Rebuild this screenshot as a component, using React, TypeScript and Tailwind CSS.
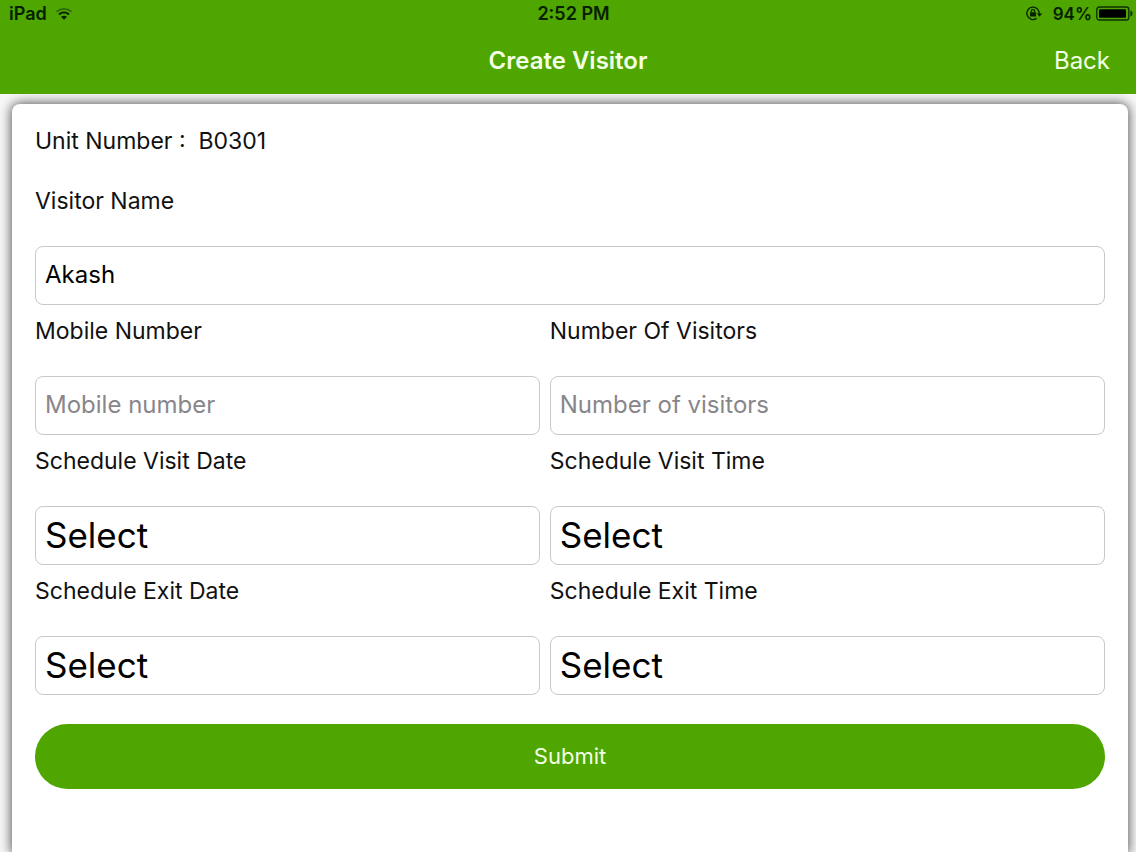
import React, { useState } from 'react';

const WifiIcon: React.FC = () => (
  <svg width="18" height="14" viewBox="0 0 18 14" fill="none" aria-hidden="true">
    <path d="M1.5 4.6C5.8 0.9 12.2 0.9 16.5 4.6" stroke="#2c6b00" strokeWidth="1.6" />
    <path d="M4 7.4C6.9 4.9 11.1 4.9 14 7.4" stroke="#062000" strokeWidth="2" />
    <path d="M9 12.8L6 9.8C7.8 8.3 10.2 8.3 12 9.8Z" fill="#062000" />
  </svg>
);

const RotationLockIcon: React.FC = () => (
  <svg width="18" height="16" viewBox="0 0 18 16" fill="none" aria-hidden="true">
    <path d="M14.2 8A6.2 6.2 0 1 0 11.6 12.4" stroke="#062000" strokeWidth="1.3" />
    <path d="M11.8 7.4H17.2L14.5 10.8Z" fill="#062000" />
    <rect x="5" y="6.2" width="6" height="4.4" rx="0.6" fill="#062000" />
    <path d="M6.2 6.6V5.4a1.8 1.8 0 0 1 3.6 0V6.6" stroke="#062000" strokeWidth="1.1" />
  </svg>
);

const BatteryIcon: React.FC = () => (
  <svg width="38" height="16" viewBox="0 0 38 16" fill="none" aria-hidden="true">
    <rect x="0.8" y="1" width="32" height="13" rx="2.6" stroke="#0c3000" strokeWidth="1.3" />
    <rect x="3" y="3.2" width="27" height="8.6" rx="1" fill="#000" />
    <path d="M34.4 4.6C37.2 5.2 37.2 9.8 34.4 10.4Z" fill="#0c3000" />
  </svg>
);

const labelClass = 'mt-[10px] mb-[29px] block text-[23px] leading-8';
const controlClass =
  'block h-[59px] w-full rounded-lg border border-[#c8c8c8] bg-white px-[9px] text-black outline-none focus:border-[#4fa600]';

interface TextFieldProps {
  id: string;
  label: string;
  value: string;
  placeholder?: string;
  type?: string;
  onChange: (value: string) => void;
}

const TextField: React.FC<TextFieldProps> = ({ id, label, value, placeholder, type = 'text', onChange }) => (
  <div>
    <label htmlFor={id} className={labelClass}>
      {label}
    </label>
    <input
      id={id}
      type={type}
      value={value}
      placeholder={placeholder}
      onChange={(e) => onChange(e.target.value)}
      className={`${controlClass} pb-[2px] text-2xl placeholder:text-[#89868b]`}
    />
  </div>
);

interface SelectFieldProps {
  id: string;
  label: string;
  options: string[];
}

const SelectField: React.FC<SelectFieldProps> = ({ id, label, options }) => (
  <div>
    <label htmlFor={id} className={labelClass}>
      {label}
    </label>
    <select id={id} defaultValue="" className={`${controlClass} appearance-none text-[35px]`}>
      <option value="">Select</option>
      {options.map((option) => (
        <option key={option} value={option}>
          {option}
        </option>
      ))}
    </select>
  </div>
);

const dates = ['Today', 'Tomorrow'];
const times = ['9:00 AM', '12:00 PM', '3:00 PM', '6:00 PM'];

export default function App() {
  const [name, setName] = useState('Akash');
  const [mobile, setMobile] = useState('');
  const [visitors, setVisitors] = useState('');

  return (
    <div className="flex min-h-screen flex-col bg-[#f8f8f8] font-['Inter',sans-serif] text-[#111]">
      <header className="relative z-10 bg-[#4fa600]">
        {/* Status bar */}
        <div className="grid h-7 grid-cols-[1fr_auto_1fr] items-center pr-[2px] pl-[9px] text-lg leading-7 font-semibold text-[#062000]">
          <div className="flex items-center gap-2">
            <span>iPad</span>
            <WifiIcon />
          </div>
          <span className="pl-1">2:52 PM</span>
          <div className="flex items-center justify-end gap-1 text-[17px]">
            <RotationLockIcon />
            <span className="pl-1.5">94%</span>
            <BatteryIcon />
          </div>
        </div>

        {/* Navigation bar */}
        <div className="grid h-[66px] grid-cols-[1fr_auto_1fr] items-center px-[26px] text-[#f3ffe6]">
          <h1 className="col-start-2 text-2xl font-semibold">Create Visitor</h1>
          <button type="button" className="justify-self-end text-2xl">
            Back
          </button>
        </div>
      </header>

      <main className="flex flex-1 flex-col px-2 pt-[10px] pl-3">
        <form
          onSubmit={(e) => e.preventDefault()}
          className="flex-1 rounded-t-lg bg-white px-[23px] pt-[21px] pb-16 shadow-[0_0_12px_1px_#555]"
        >
          <p className="text-[23px] leading-8">
            Unit Number :&nbsp; <span>B0301</span>
          </p>

          <div className="mt-[28px]">
            <TextField id="visitor-name" label="Visitor Name" value={name} onChange={setName} />
          </div>

          <div className="grid grid-cols-[10fr_11fr] gap-x-[10px]">
            <TextField
              id="mobile"
              type="tel"
              label="Mobile Number"
              placeholder="Mobile number"
              value={mobile}
              onChange={setMobile}
            />
            <TextField
              id="visitors"
              label="Number Of Visitors"
              placeholder="Number of visitors"
              value={visitors}
              onChange={setVisitors}
            />
            <SelectField id="visit-date" label="Schedule Visit Date" options={dates} />
            <SelectField id="visit-time" label="Schedule Visit Time" options={times} />
            <SelectField id="exit-date" label="Schedule Exit Date" options={dates} />
            <SelectField id="exit-time" label="Schedule Exit Time" options={times} />
          </div>

          <button
            type="submit"
            className="mt-[29px] block h-[65px] w-full rounded-full bg-[#4fa600] text-[22px] text-[#f3ffe6]"
          >
            Submit
          </button>
        </form>
      </main>
    </div>
  );
}
